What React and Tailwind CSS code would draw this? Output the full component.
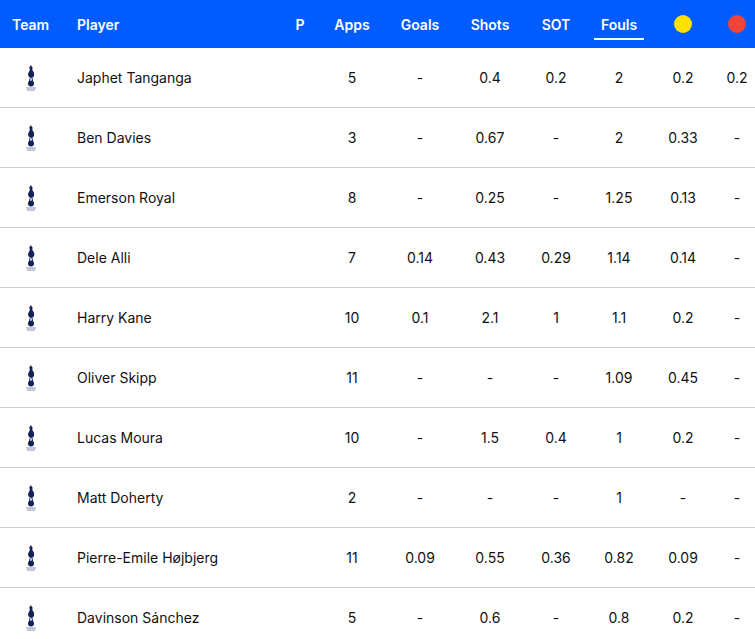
const rows=[
["Japhet Tanganga","5","-","0.4","0.2","2","0.2","0.2"],
["Ben Davies","3","-","0.67","-","2","0.33","-"],
["Emerson Royal","8","-","0.25","-","1.25","0.13","-"],
["Dele Alli","7","0.14","0.43","0.29","1.14","0.14","-"],
["Harry Kane","10","0.1","2.1","1","1.1","0.2","-"],
["Oliver Skipp","11","-","-","-","1.09","0.45","-"],
["Lucas Moura","10","-","1.5","0.4","1","0.2","-"],
["Matt Doherty","2","-","-","-","1","-","-"],
["Pierre-Emile Højbjerg","11","0.09","0.55","0.36","0.82","0.09","-"],
["Davinson Sánchez","5","-","0.6","-","0.8","0.2","-"],
];
const cols="grid grid-cols-[62px_218px_40px_64px_72px_68px_64px_62px_66px_42px] w-[758px]";
function Logo(){return(
<svg width="14" height="28" viewBox="0 0 14 28" fill="#132257">
<path d="M7 1 L8 3 L9 4 L8 5 L9 7 Q11 9 10 12 Q9 14 7 14 L5 13 Q3 10 5 8 L6 5 L5 4 Z"/>
<path d="M6 14 L5.5 17 M8 14 L8.5 17" stroke="#132257" strokeWidth="1"/>
<circle cx="7" cy="19.5" r="3"/>
<rect x="2" y="23.5" width="10" height="1" fill="#8a8fb0"/>
<rect x="3" y="25.5" width="8" height="1" fill="#8a8fb0"/>
</svg>)}
export default function App(){
return(<div className="w-[755px] h-[639px] overflow-hidden bg-white" style={{fontFamily:"Inter, 'Open Sans', sans-serif"}}>
<div className={cols+" h-12 bg-[#005cff] text-white text-[14px] font-semibold items-center"}>
<div className="pl-3">Team</div><div className="pl-[15px]">Player</div>
<div className="text-center">P</div><div className="text-center">Apps</div><div className="text-center">Goals</div><div className="text-center">Shots</div><div className="text-center">SOT</div>
<div className="flex justify-center"><span className="relative">Fouls<span className="absolute left-[-7px] right-[-7px] top-[24px] h-[2px] bg-white"></span></span></div>
<div className="flex justify-center"><span className="w-[18px] h-[18px] rounded-full bg-[#ffe000]"></span></div>
<div className="flex justify-center"><span className="w-[18px] h-[18px] rounded-full bg-[#f04438]"></span></div>
</div>
{rows.map((r,i)=>(<div key={i} className={cols+" h-[60px] border-b border-[#cfcfcf] items-center text-[14px] text-[#111]"}>
<div className="flex justify-center"><Logo/></div>
<div className="pl-[15px]">{r[0]}</div><div></div>
{r.slice(1).map((v,j)=><div key={j} className="text-center">{v}</div>)}
</div>))}
</div>)}
